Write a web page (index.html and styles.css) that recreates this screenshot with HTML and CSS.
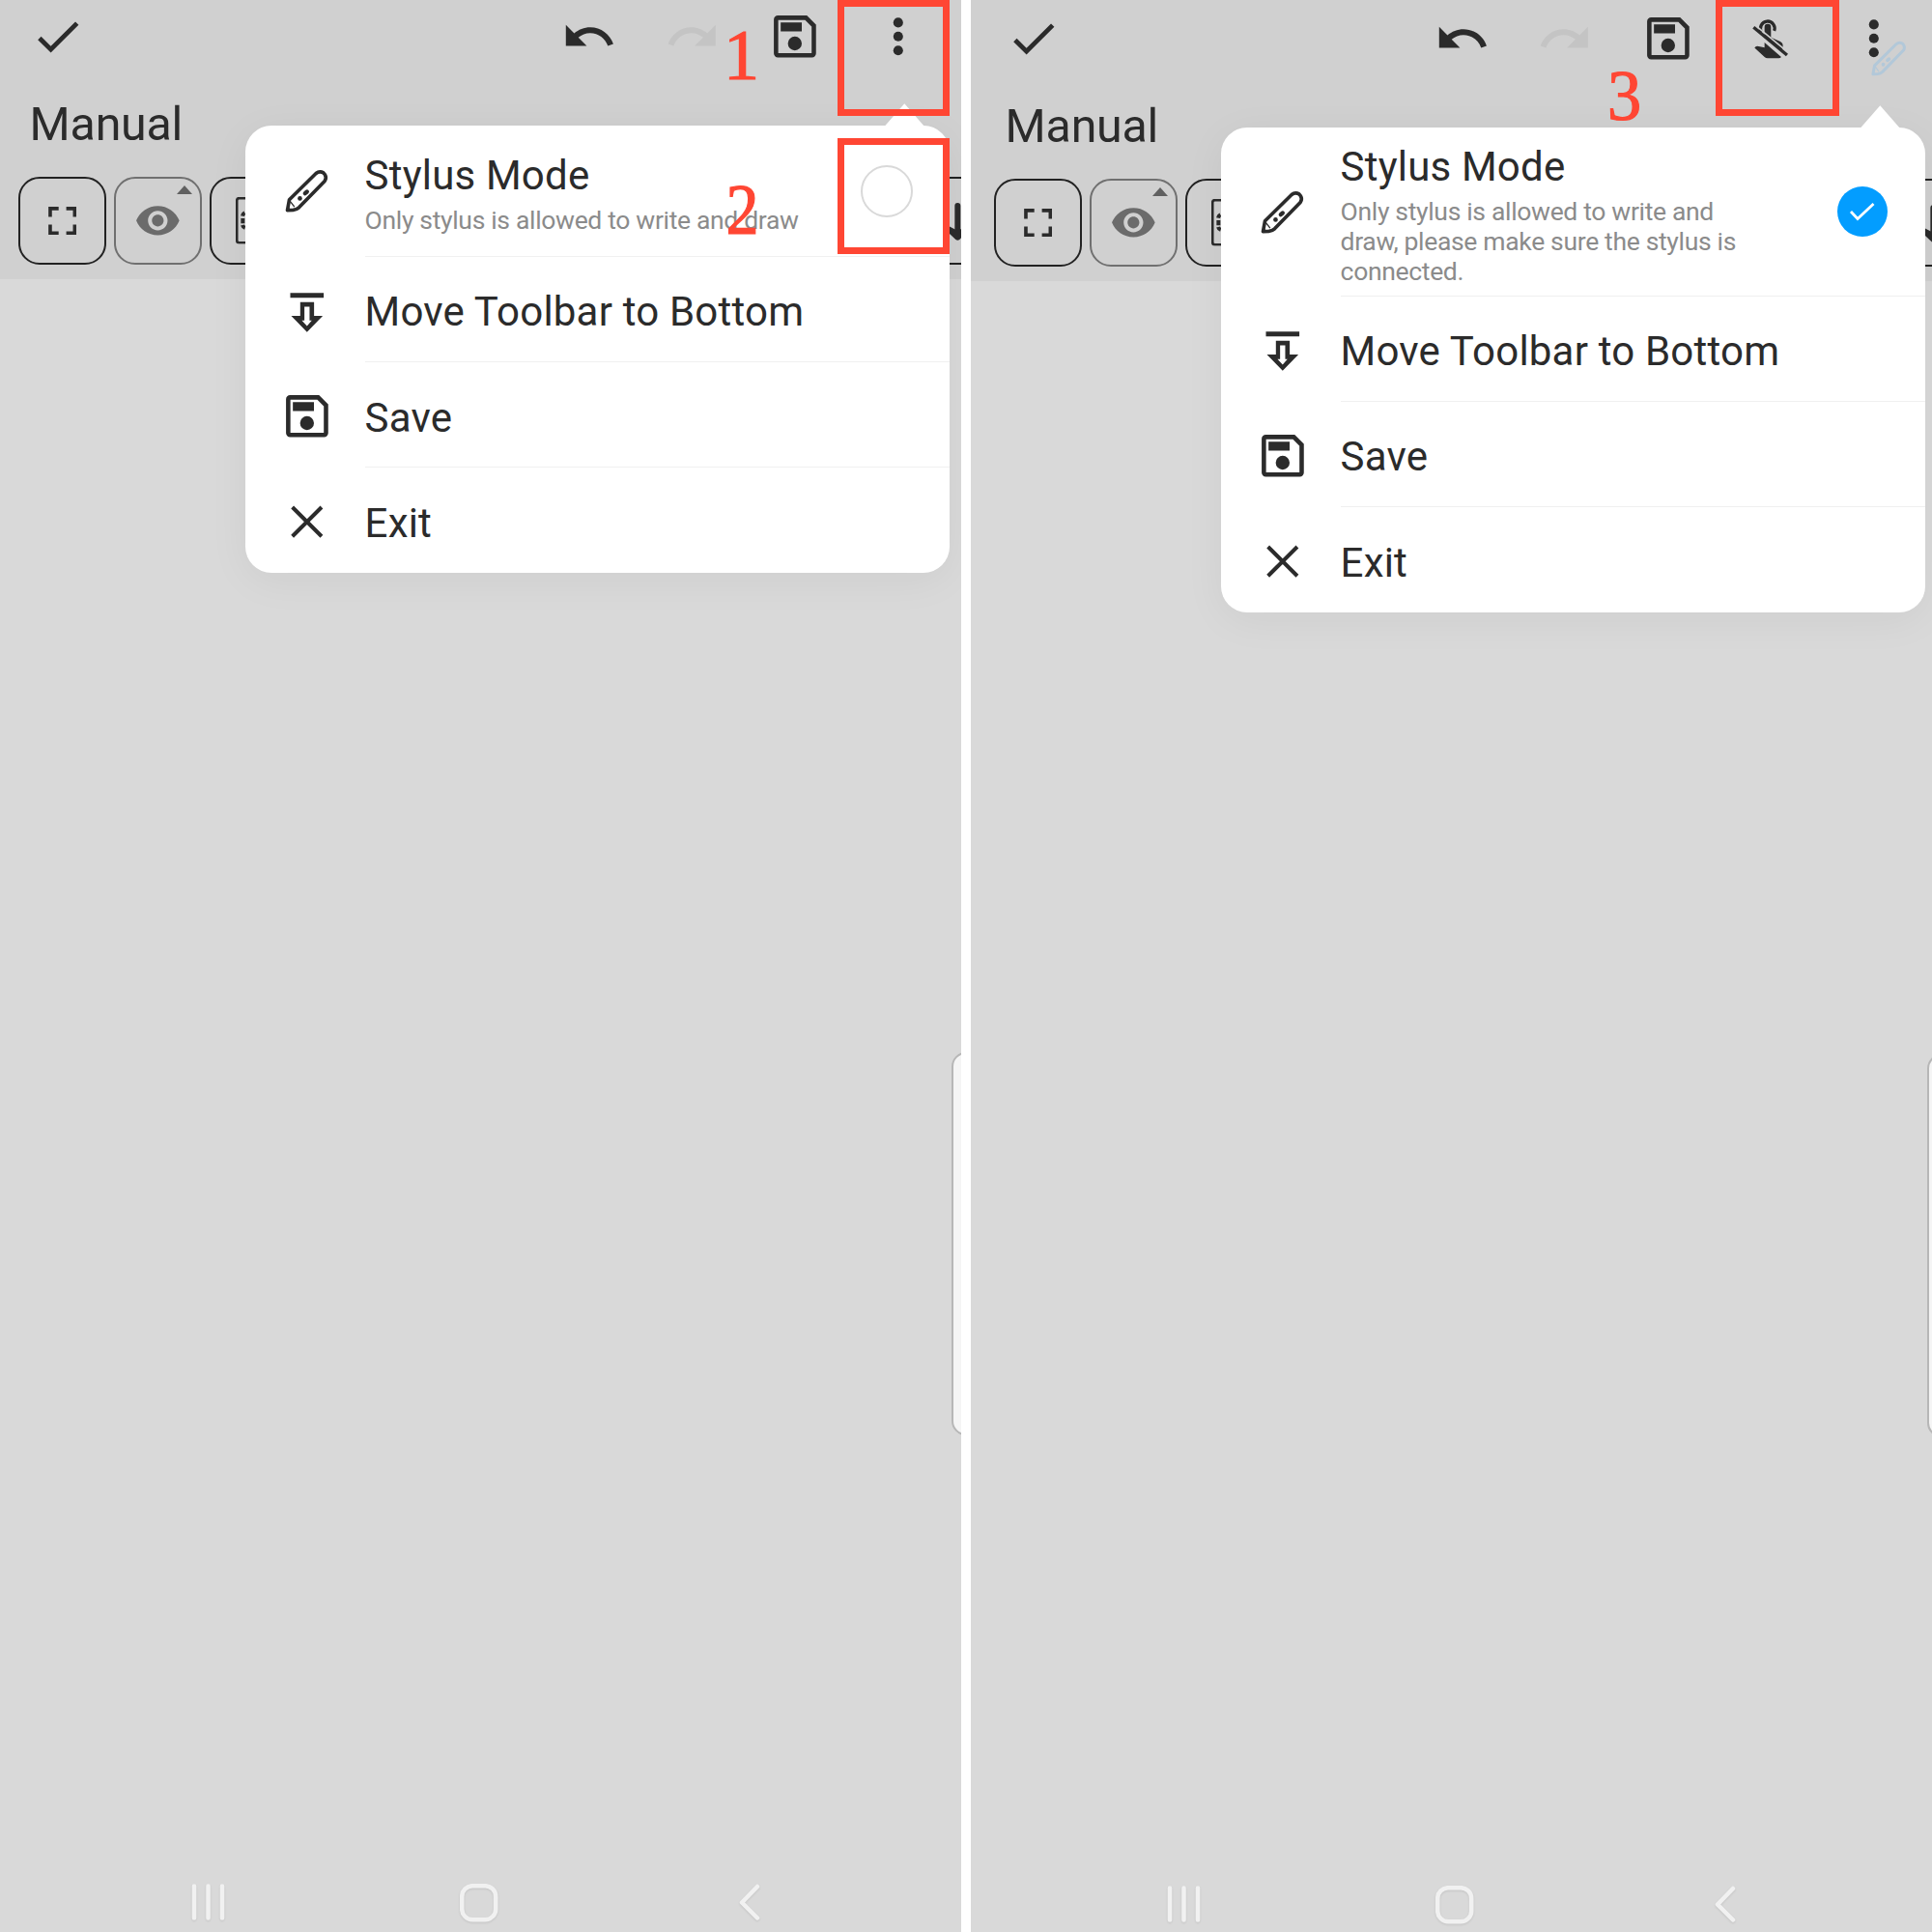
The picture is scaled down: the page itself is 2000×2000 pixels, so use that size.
FILE: index.html
```html
<!DOCTYPE html>
<html lang="en">
<head>
<meta charset="utf-8">
<title>Stylus Mode</title>
<link rel="stylesheet" href="styles.css">
</head>
<body>
<svg class="sprite" aria-hidden="true">
  <symbol id="check" viewBox="0 0 24 24"><path d="M9 16.17L4.83 12l-1.42 1.41L9 19 21 7l-1.41-1.41z"/></symbol>
  <symbol id="undo" viewBox="0 0 24 24"><path d="M12.5 8c-2.65 0-5.05.99-6.9 2.6L2 7v9h9l-3.62-3.62c1.39-1.16 3.16-1.88 5.12-1.88 3.54 0 6.55 2.31 7.6 5.5l2.37-.78C21.08 11.03 17.15 8 12.5 8z"/></symbol>
  <symbol id="redo" viewBox="0 0 24 24"><path transform="matrix(-1 0 0 1 24 0)" d="M12.5 8c-2.65 0-5.05.99-6.9 2.6L2 7v9h9l-3.62-3.62c1.39-1.16 3.16-1.88 5.12-1.88 3.54 0 6.55 2.31 7.6 5.5l2.37-.78C21.08 11.03 17.15 8 12.5 8z"/></symbol>
  <symbol id="save" viewBox="0 0 24 24"><path d="M4.7 3.9h12.1l3.4 3.4v12a.8.8 0 0 1-.8.8H4.7a.8.8 0 0 1-.8-.8V4.7a.8.8 0 0 1 .8-.8z" fill="none" stroke="currentColor" stroke-width="1.9"/><path d="M5.9 5.9H15v3.9H5.9z"/><circle cx="12" cy="15" r="3"/></symbol>
  <symbol id="more" viewBox="0 0 24 24"><circle cx="12" cy="6" r="2.1"/><circle cx="12" cy="12" r="2.1"/><circle cx="12" cy="18" r="2.1"/></symbol>
  <symbol id="no-touch" viewBox="914 34 173 173">
    <path d="M973 101A22 22 0 1 1 1012 97" fill="none" stroke="currentColor" stroke-width="10"/>
    <path d="M982 118V85a10 10 0 0 1 20 0v32l29 13q9 5 8 15l-2 14z"/>
    <path d="M951 150q4-8 13-5l18 4V133l52 45q-3 4-8 4H992q-6 0-10-4z"/>
    <path d="M955 81L1054 163" stroke="#d0d0d0" stroke-width="5"/>
    <path d="M948 86L1052 172" stroke="currentColor" stroke-width="10"/>
  </symbol>
  <symbol id="pencil" viewBox="867.5 510.5 173 173"><path d="M893 657L899 624 982 542q11-9 23-2l5 6q6 10-1 20L929 648q-8 7-18 8z" fill="none" stroke="currentColor" stroke-width="11" stroke-linejoin="round"/><circle cx="932" cy="620" r="7"/><path d="M948 604l6-5" stroke="currentColor" stroke-width="13" stroke-linecap="round"/><path d="M901 628l14 18" stroke="currentColor" stroke-width="4"/></symbol>
  <symbol id="move-down" viewBox="149.5 65.5 173 173"><path d="M184 96h104v15H184zM215 125h43v43h27l-49 50-49-50h28zM228 139v43h-8l16 17 15-17h-7v-43z" fill-rule="evenodd"/></symbol>
  <symbol id="close" viewBox="0 0 173 173"><path d="M41 42L132 133M132 42L41 133" fill="none" stroke="currentColor" stroke-width="12"/></symbol>
  <symbol id="fullscreen" viewBox="0 0 88 88"><path d="M5.5 32V5.5H32M56 5.5h26.500V32M82.500 56v26.500H56M32 82.500H5.500V56" fill="none" stroke="currentColor" stroke-width="11"/></symbol>
  <symbol id="eye" viewBox="0 0 24 24"><path d="M12 4.500C7 4.500 2.730 7.610 1 12c1.730 4.390 6 7.500 11 7.500s9.270-3.110 11-7.500c-1.730-4.390-6-7.500-11-7.500zM12 17c-2.760 0-5-2.240-5-5s2.240-5 5-5 5 2.240 5 5-2.240 5-5 5zm0-8c-1.660 0-3 1.340-3 3s1.340 3 3 3 3-1.340 3-3-1.340-3-3-3z"/></symbol>
  <symbol id="page" viewBox="0 0 120 146"><rect x="3.500" y="3.500" width="113" height="139" rx="8" fill="none" stroke="currentColor" stroke-width="8"/><path d="M28 49q-6 3-7 10M22 66v16M21 87q2 7 8 9" fill="none" stroke="currentColor" stroke-width="12"/></symbol>
  <symbol id="arrow-down" viewBox="0 0 90 120"><path d="M25 9V90" fill="none" stroke="currentColor" stroke-width="18" stroke-linecap="round"/><path d="M-6 70L20 84h10L56 70V86L31 114q-6 5-12 0L-6 90z"/></symbol>
</svg>

<main class="board">
  <section class="screen">
    <div class="content">
      <header class="header">
        <div class="appbar">
          <svg class="icon"><use href="#check"/></svg>
          <div class="actions">
            <svg class="icon"><use href="#undo"/></svg>
            <svg class="icon icon-disabled"><use href="#redo"/></svg>
            <svg class="icon"><use href="#save"/></svg>
            <svg class="icon"><use href="#more"/></svg>
          </div>
        </div>
        <h1 class="title">Manual</h1>
        <div class="tools">
          <div class="tool"><svg class="tool-full"><use href="#fullscreen"/></svg></div>
          <div class="tool tool-muted"><svg class="tool-eye"><use href="#eye"/></svg><i class="caret"></i></div>
          <div class="tool tool-page"><svg class="page-icon"><use href="#page"/></svg></div>
          <div class="tool tool-last"><svg class="down-icon"><use href="#arrow-down"/></svg></div>
        </div>
      </header>
      <div class="canvas"></div>
      <nav class="nav">
        <svg class="nav-recents" viewBox="0 0 36 40"><path d="M3 2.500v33M17.500 2.500v33M32 2.500v33"/></svg>
        <svg class="nav-home" viewBox="0 0 40 40"><rect x="2.200" y="2.200" width="35" height="35" rx="11"/></svg>
        <svg class="nav-back" viewBox="0 0 24 40"><path d="M20 3L4 19.500 20 35.500"/></svg>
      </nav>
      <div class="menu">
        <div class="row row-stylus">
          <svg class="icon"><use href="#pencil"/></svg>
          <div class="cell"><div class="text"><div class="label">Stylus Mode</div><p class="hint">Only stylus is allowed to write and draw</p></div><span class="radio"></span></div>
        </div>
        <div class="row"><svg class="icon"><use href="#move-down"/></svg><div class="cell"><div class="label">Move Toolbar to Bottom</div></div></div>
        <div class="row"><svg class="icon"><use href="#save"/></svg><div class="cell"><div class="label">Save</div></div></div>
        <div class="row"><svg class="icon"><use href="#close"/></svg><div class="cell"><div class="label">Exit</div></div></div>
      </div>
      <div class="edge-handle"></div>
    </div>
    <div class="mark mark-one"></div>
    <div class="mark mark-two"></div>
    <span class="digit digit-one">1</span>
    <span class="digit digit-two">2</span>
  </section>

  <section class="screen screen-on">
    <div class="content">
      <header class="header">
        <div class="appbar">
          <svg class="icon"><use href="#check"/></svg>
          <div class="actions">
            <svg class="icon"><use href="#undo"/></svg>
            <svg class="icon icon-disabled"><use href="#redo"/></svg>
            <svg class="icon"><use href="#save"/></svg>
            <svg class="icon"><use href="#no-touch"/></svg>
            <svg class="icon"><use href="#more"/></svg>
          </div>
        </div>
        <h1 class="title">Manual</h1>
        <div class="tools">
          <div class="tool"><svg class="tool-full"><use href="#fullscreen"/></svg></div>
          <div class="tool tool-muted"><svg class="tool-eye"><use href="#eye"/></svg><i class="caret"></i></div>
          <div class="tool tool-page"><svg class="page-icon"><use href="#page"/></svg></div>
          <div class="tool tool-last"><svg class="down-icon"><use href="#arrow-down"/></svg></div>
        </div>
      </header>
      <div class="canvas"></div>
      <nav class="nav">
        <svg class="nav-recents" viewBox="0 0 36 40"><path d="M3 2.500v33M17.500 2.500v33M32 2.500v33"/></svg>
        <svg class="nav-home" viewBox="0 0 40 40"><rect x="2.200" y="2.200" width="35" height="35" rx="11"/></svg>
        <svg class="nav-back" viewBox="0 0 24 40"><path d="M20 3L4 19.500 20 35.500"/></svg>
      </nav>
      <div class="menu">
        <div class="row row-stylus">
          <svg class="icon"><use href="#pencil"/></svg>
          <div class="cell"><div class="text"><div class="label">Stylus Mode</div><p class="hint hint-wrap">Only stylus is allowed to write and draw, please make sure the stylus is connected.</p></div><span class="radio radio-on"><svg viewBox="0 0 52 52"><path d="M14 26l7 7.500L37.500 18"/></svg></span></div>
        </div>
        <div class="row"><svg class="icon"><use href="#move-down"/></svg><div class="cell"><div class="label">Move Toolbar to Bottom</div></div></div>
        <div class="row"><svg class="icon"><use href="#save"/></svg><div class="cell"><div class="label">Save</div></div></div>
        <div class="row"><svg class="icon"><use href="#close"/></svg><div class="cell"><div class="label">Exit</div></div></div>
      </div>
      <svg class="stylus-pointer"><use href="#pencil"/></svg>
      <div class="edge-handle"></div>
    </div>
    <div class="mark mark-three"></div>
    <span class="digit digit-three">3</span>
  </section>
</main>
</body>
</html>
```
FILE: styles.css
```css
* { box-sizing: border-box; }
body { margin: 0; background: #fff; font-family: Roboto, "Liberation Sans", sans-serif; color: #2b2b2b; }
.sprite { position: absolute; width: 0; height: 0; }

.board { display: grid; grid-template-columns: 995px 995px; column-gap: 10px; width: 2000px; height: 2000px; overflow: hidden; }
.screen { position: relative; height: 2000px; overflow: hidden; background: #d9d9d9; }
.content { position: relative; display: flex; flex-direction: column; width: 995px; height: 2000px; }
.screen-on .content { margin-left: 5px; top: 2px; }

.header { height: 288.5px; background: #d0d0d0; box-shadow: -5px 0 #d0d0d0, 0 -4px #d0d0d0, -5px -4px #d0d0d0; }
.appbar { display: flex; justify-content: space-between; padding: 9.2px 36.5px 0 31.2px; }
.actions { display: flex; gap: 49px; }
.icon { display: block; flex: none; width: 57.6px; height: 57.6px; color: #2b2b2b; fill: currentColor; }
.icon-disabled { color: #c4c4c4; }
.title { margin: 31.8px 0 0 30.6px; font-size: 48.3px; line-height: 60px; font-weight: 400; letter-spacing: -.2px; }

.tools { display: flex; gap: 8px; padding: 24px 0 0 19px; }
.tool { position: relative; flex: none; display: flex; align-items: center; justify-content: center; width: 91px; height: 91.500px; border: 2.600px solid #222; border-radius: 22px; color: #2b2b2b; fill: currentColor; }
.tool-muted { border-color: #707070; color: #6b6b6b; }
.tool-full { width: 29.300px; height: 29px; }
.tool-eye { width: 48.700px; height: 48.700px; }
.caret { position: absolute; top: 7px; right: 8px; border: 8.500px solid transparent; border-top: 0; border-bottom: 9.500px solid #606060; }
.tool-page, .tool-last { justify-content: flex-start; }
.page-icon { width: 40px; height: 48.600px; margin-left: 25px; }
.tool-last { margin-left: 639px; }
.down-icon { width: 30px; height: 40px; margin: 3px 0 0 25.500px; overflow: visible; }

.canvas { flex: 1; }
.nav { display: flex; height: 50px; padding-left: 198px; fill: none; stroke: #f1f1f1; stroke-width: 4.500; stroke-linecap: round; stroke-linejoin: round; filter: drop-shadow(0 1.500px 1px rgba(0,0,0,.1)); }
.nav-recents { width: 36px; height: 40px; }
.nav-home { width: 40px; height: 40px; margin-left: 241.500px; }
.nav-back { width: 24px; height: 40px; margin-left: 248px; }

.menu { position: absolute; left: 254px; top: 130.300px; width: 728.800px; border-radius: 27px; background: #fff; box-shadow: 0 8px 44px rgba(0,0,0,.05); }
.menu::before { content: ""; position: absolute; right: 25.500px; top: -23px; width: 42px; height: 24px; background: #fff; clip-path: polygon(50% 0, 100% 100%, 0 100%); }
.row { display: flex; align-items: center; height: 109.200px; padding-left: 35px; }
.row > .icon { margin-top: 2px; }
.row-stylus { height: 135.500px; }
.row-stylus > .icon { margin-top: 0; }
.screen-on .row-stylus { height: 174.300px; }
.cell { flex: 1; align-self: stretch; display: flex; align-items: center; justify-content: space-between; margin-left: 31px; padding-top: 6px; border-bottom: 1.500px solid #f0f0f0; }
.row:last-child .cell { border-bottom: 0; }
.label { font-size: 42px; line-height: 49px; letter-spacing: .2px; white-space: nowrap; }
.hint { margin: 6px 0 0; font-size: 26.500px; line-height: 31.300px; letter-spacing: -.330px; color: #8b8b8b; white-space: nowrap; }
.hint-wrap { width: 425px; white-space: normal; }
.radio { width: 54px; height: 54px; margin: -5px 38px 0 0; border: 2px solid #d9d9d9; border-radius: 50%; }
.radio-on { width: 52px; height: 52px; margin-right: 39px; border: 0; background: #039dff; }
.radio-on svg { display: block; fill: none; stroke: #fff; stroke-width: 2.800; }

.edge-handle { position: absolute; left: 985px; top: 1089px; width: 40px; height: 397px; border: 2px solid #b7b7b7; border-radius: 15px; background: #f5f5f5; }
.stylus-pointer { position: absolute; left: 921.500px; top: 35px; width: 47px; height: 47px; color: #b2c8d9; fill: currentColor; }

.mark { position: absolute; width: 116px; height: 120px; border: 7px solid #ff4633; }
.mark-one { left: 867px; top: 0; }
.mark-two { left: 867px; top: 143px; }
.mark-three { left: 771px; top: 0; width: 128px; }
.digit { position: absolute; font: 74px/74px "Liberation Serif", serif; color: #ff4633; -webkit-text-stroke: 1.200px #ff4633; }
.digit-one { left: 749px; top: 20px; }
.digit-two { left: 750px; top: 180px; transform: scaleX(.92); }
.digit-three { left: 657.500px; top: 62px; transform: scaleX(.95); }
```
